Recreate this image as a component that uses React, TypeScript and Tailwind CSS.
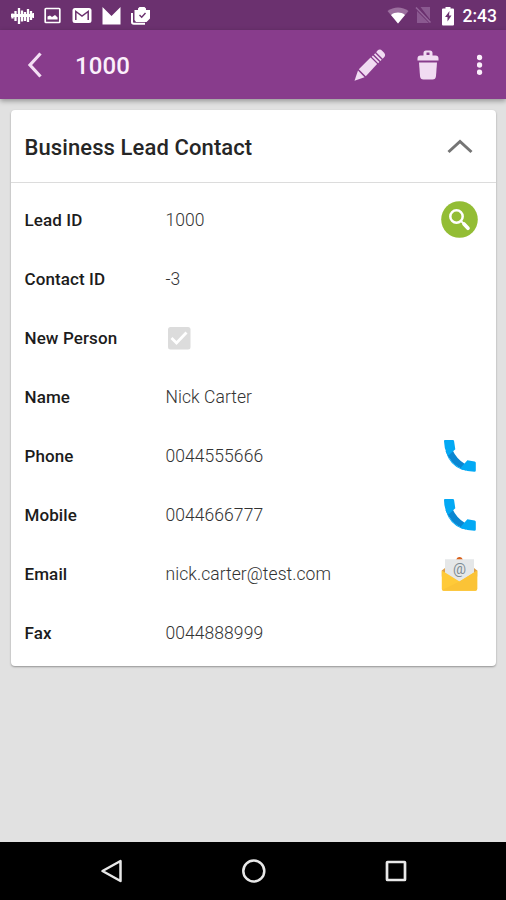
import type { ReactNode } from "react";

type Field = {
  label: string;
  value: ReactNode;
  action?: ReactNode;
};

function StatusBar() {
  return (
    <div className="flex h-[30px] shrink-0 items-center justify-between bg-[#6b316f] pt-[2px] pl-[11px] pr-[9px] text-white">
      <div className="flex items-center">
        <svg width="23" height="18" viewBox="0 0 23 18" className="mr-[10px]" stroke="#fff" strokeWidth="2.3">
          <path d="M1.5 6.5v5M4.5 4v10M8 1v16M11 3.5v11M14 5v9M17 2v13M20 4v9M22.5 6v5" />
          <path d="M0 8.5h23" strokeWidth="3" />
        </svg>
        <svg width="17" height="18" viewBox="0 0 17 18" className="mr-[11px]">
          <rect x="1.2" y="1.5" width="14.6" height="14" rx="0.8" fill="none" stroke="#fff" strokeWidth="1.7" />
          <path d="M3.5 12.5V9.5l2.5-1 2 1.5L11 8l2.6 2.5v2z" fill="#fff" />
        </svg>
        <svg width="20" height="18" viewBox="0 0 20 18" className="mr-[10px]">
          <rect x="0.5" y="1" width="19" height="15" rx="2.5" fill="#fff" />
          <path d="M3.8 13V4.5L10 9l6.2-4.5V13" fill="none" stroke="#6b316f" strokeWidth="1.5" />
        </svg>
        <svg width="19" height="18" viewBox="0 0 19 18" className="mr-[10px]">
          <path d="M0.5 0l9 9 9-9v17.5h-18z" fill="#fff" />
        </svg>
        <svg width="20" height="18" viewBox="0 0 20 18">
          <path d="M1 6v9q0 1.8 1.8 1.8H14" fill="none" stroke="#fff" strokeWidth="2" />
          <path d="M3.5 3h3.5V1.5L8.5 0h5L15 1.5V3h4v8.5L15.5 15H5L3.5 13z" fill="#fff" />
          <path d="M8.5 8l2.2 2.2L14.5 6" fill="none" stroke="#6b316f" strokeWidth="1.4" />
        </svg>
      </div>
      <div className="flex items-center">
        <svg width="22" height="18" viewBox="0 0 22 18" className="mr-[6px]">
          <path d="M0.5 4C6.5-.8 15.5-.8 21.5 4L11 16.5z" fill="#9b6f9e" />
          <path d="M4 8c4-3.2 10-3.2 14 0L11 16.5z" fill="#fff" />
        </svg>
        <svg width="17" height="18" viewBox="0 0 17 18" className="mr-[9px]">
          <path d="M5.5 0H15v12.5zM2 4l12 12H2z" fill="#8a5990" />
          <path d="M1 .5l14.5 15" stroke="#94659a" strokeWidth="1.5" />
        </svg>
        <svg width="14" height="19" viewBox="0 0 14 19" className="mr-[8px]">
          <path d="M4.5 0h5v1.5H12q1 0 1 1v15q0 1-1 1H2q-1 0-1-1v-15q0-1 1-1h2.5z" fill="#fff" />
          <path d="M8.5 4L4 10h2.5v4.5L10.5 8.5H8z" fill="#6b316f" />
        </svg>
        <span className="text-[17.5px] leading-[20px] font-medium">2:43</span>
      </div>
    </div>
  );
}

function AppBar() {
  return (
    <div className="relative flex h-[69px] shrink-0 items-center bg-[#883c8c] pl-[27px] pr-[23px] shadow-[0_2px_5px_rgba(0,0,0,0.35)]">
      <svg width="16" height="28" viewBox="0 0 16 28" className="mr-[32px]">
        <path d="M13.5 2.5L3 14l10.5 11.5" fill="none" stroke="#f3dff4" strokeWidth="3.2" />
      </svg>
      <h1 className="grow pt-[2px] text-[24px] tracking-[0.15px] font-medium text-[#fbeffb]">1000</h1>
      <svg width="32" height="32" viewBox="0 0 32 32" className="mr-[31px]" fill="#f1dcf2">
        <path d="M23.3 1.8q2.6-2.3 4.8-.1l2 2q2 2.300 0 4.600l-1.400 1.400-6.500-6.500z" />
        <path d="M21.200 4.200l6.500 6.500-1.200 1.200-6.500-6.500zM18.900 6.500l6.500 6.500-1.200 1.200-6.500-6.500z" />
        <path d="M16.600 8.600l6.500 6.500-11.300 12.200-7-7z" />
        <path d="M4 21.400l6.500 6.800L.5 31.800z" />
      </svg>
      <svg width="22" height="30" viewBox="0 0 22 30" className="mr-[38px]" fill="#f1dcf2">
        <path d="M.5 8.5Q.5 5.500 3.500 5.500h3V3Q6.500.5 9 .5h4Q15.500.5 15.500 3v2.500h3q3 0 3 3v2H.5z" />
        <rect x="9.5" y="2.5" width="3" height="2.5" fill="#883c8c" />
        <path d="M2 12.500h18l-1 13.500q-.3 3.500-3.500 3.500h-9Q3.300 29.500 3 26z" />
      </svg>
      <svg width="6" height="22" viewBox="0 0 6 22" fill="#fbeffb">
        <circle cx="2.500" cy="3.500" r="2.700" />
        <circle cx="2.500" cy="11" r="2.700" />
        <circle cx="2.500" cy="18.300" r="2.700" />
      </svg>
    </div>
  );
}

function SearchIcon() {
  return (
    <svg width="37" height="37" viewBox="0 0 37 37">
      <circle cx="18.500" cy="18.500" r="18.300" fill="#93bd35" />
      <circle cx="15.500" cy="15.500" r="6.200" fill="none" stroke="#fff" strokeWidth="2.500" />
      <path d="M20 20l2.500 2.500" stroke="#fff" strokeWidth="1.800" />
      <path d="M23 23l4 4.200" stroke="#fff" strokeWidth="3.700" strokeLinecap="round" />
    </svg>
  );
}

function PhoneIcon() {
  return (
    <svg width="37" height="34" viewBox="0 0 37 34">
      <path d="M4.500 12Q7 19 11.500 23.500 17 29 25 31.500l-1-6.500Q15.500 20 11.500 11z" fill="#0a86d1" />
      <path d="M3.800 1Q3 1 3 2.300 3 9.500 6.500 16.500l1.500-.5 6.300-5.800-1.200-8Q13 1 11.800 1z" fill="#03a9f4" />
      <path d="M19.500 29.800Q26 32.700 33.500 32.700q1.300 0 1.300-1.300v-7.600q0-1.200-1.200-1.400l-7.200-1.200-5.800 6.500z" fill="#03a9f4" />
      <path d="M4.800 12.500Q10 26.500 25 31.500l-4-.8Q8.500 26 4.800 12.500z" fill="#03a9f4" />
    </svg>
  );
}

function MailIcon() {
  return (
    <svg width="37" height="36" viewBox="0 0 37 36">
      <path d="M15 4l1.300-2.200q2.200-1.600 4.400 0L22 4z" fill="#d9601a" />
      <path d="M.8 14.500L4 12h29l3.200 2.500v6H.8z" fill="#dda04a" />
      <path d="M4 3.300h29V22L18.500 29 4 22z" fill="#e5e7e8" />
      <text x="18.500" y="18" textAnchor="middle" fontSize="14.500" fill="#7d8b92" className="font-['Roboto',sans-serif]">
        @
      </text>
      <path d="M.8 14.500L18.500 25.500l17.700-11V33q0 1.800-1.800 1.800H2.600Q.8 34.800.8 33z" fill="#ffca38" />
      <path d="M1 34L18.500 25.500l17.700-11V33q0 1.800-1.800 1.800H2.600z" fill="#fbc336" />
    </svg>
  );
}

function CheckedBox() {
  return (
    <svg width="26" height="24" viewBox="0 0 26 24">
      <rect x="2" y="0" width="22.500" height="22.500" rx="2.500" fill="#dcdcdc" />
      <path d="M5.500 11l5 5L20.500 5.500" fill="none" stroke="#fff" strokeWidth="2.800" />
    </svg>
  );
}

const fields: Field[] = [
  { label: "Lead ID", value: "1000", action: <SearchIcon /> },
  { label: "Contact ID", value: "-3" },
  { label: "New Person", value: <CheckedBox /> },
  { label: "Name", value: "Nick Carter" },
  { label: "Phone", value: "0044555666", action: <PhoneIcon /> },
  { label: "Mobile", value: "0044666777", action: <PhoneIcon /> },
  { label: "Email", value: "nick.carter@test.com", action: <MailIcon /> },
  { label: "Fax", value: "0044888999" },
];

function ContactCard() {
  return (
    <section className="mx-[11px] mt-[11px] h-[556px] w-[485px] rounded-[4px] bg-white shadow-[0_1px_2px_rgba(0,0,0,0.35)]">
      <div className="flex h-[73px] items-center justify-between border-b border-[#dcdcdc] pl-[13.5px] pr-[23px]">
        <h2 className="pt-[2px] text-[22px] tracking-[0.1px] font-medium text-[#262626]">Business Lead Contact</h2>
        <svg width="26" height="16" viewBox="0 0 26 16">
          <path d="M1.5 14L13 3.5 24.5 14" fill="none" stroke="#757575" strokeWidth="3" />
        </svg>
      </div>
      <div className="pt-[7px]">
        {fields.map((field) => (
          <div key={field.label} className="flex h-[59px] items-center pl-[13.5px] pr-[18px]">
            <div className="w-[141px] pt-[2px] text-[17px] tracking-[0.1px] font-medium text-[#1c1c1c]">
              {field.label}
            </div>
            <div className="grow pt-[2px] text-[17.5px] tracking-[0.06px] font-light text-[#333]">{field.value}</div>
            {field.action}
          </div>
        ))}
      </div>
    </section>
  );
}

function NavBar() {
  return (
    <div className="flex h-[58px] shrink-0 items-center justify-between bg-black pl-[99px] pr-[98px]">
      <svg width="24" height="26" viewBox="0 0 24 26">
        <path d="M21.5 3v20L3.5 13z" fill="none" stroke="#e8e8e8" strokeWidth="2.5" strokeLinejoin="round" />
      </svg>
      <svg width="26" height="26" viewBox="0 0 26 26">
        <circle cx="12.800" cy="13" r="10.5" fill="none" stroke="#e8e8e8" strokeWidth="2.5" />
      </svg>
      <svg width="24" height="24" viewBox="0 0 24 24">
        <rect x="3" y="3" width="18" height="18" rx="0.5" fill="none" stroke="#e8e8e8" strokeWidth="2.7" />
      </svg>
    </div>
  );
}

function App() {
  return (
    <div className="flex h-[900px] w-[506px] flex-col overflow-hidden bg-[#e1e1e1] font-['Roboto',sans-serif]">
      <StatusBar />
      <AppBar />
      <main className="grow">
        <ContactCard />
      </main>
      <NavBar />
    </div>
  );
}

export default App;
